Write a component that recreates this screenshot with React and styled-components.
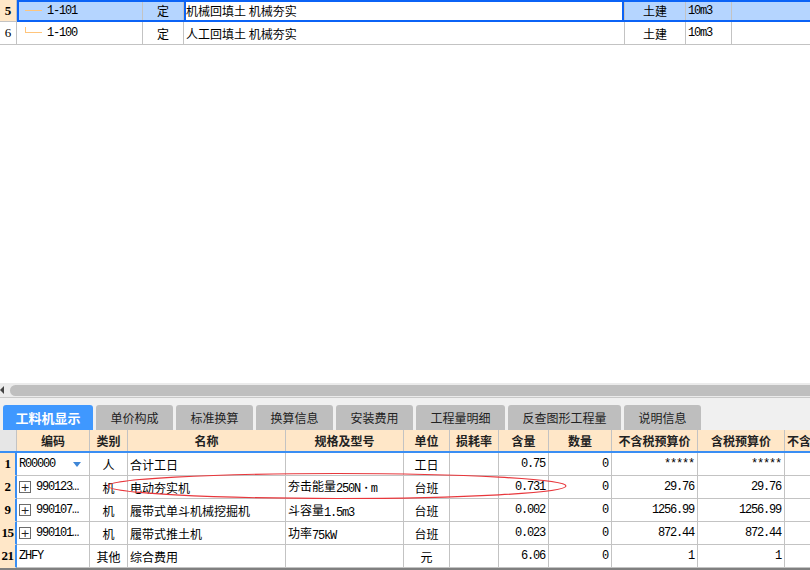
import React from 'react';
import styled, { createGlobalStyle, css } from 'styled-components';

const BLUE = '#0b63f6';
const PEACH = '#ffe7c8';
const LINE = '#c3c3c3';

const Global = createGlobalStyle`
  html, body { margin: 0; padding: 0; background: #fff; }
  body {
    font-family: "Noto Sans CJK SC", "Noto Sans", sans-serif;
    font-size: 12px;
    color: #000;
  }
  * { box-sizing: border-box; }
`;

const Page = styled.div`
  width: 810px;
  height: 570px;
  display: flex;
  flex-direction: column;
  overflow: hidden;
  background: #fff;
`;

/* ---------- top grid ---------- */
const TopArea = styled.div`
  flex: 1;
  background: #fff;
`;

const TopRow = styled.div`
  display: flex;
  height: ${p => p.$h}px;
`;

const RowNum = styled.div`
  width: 17px;
  flex: none;
  display: flex;
  align-items: center;
  justify-content: center;
  border-right: 1px solid ${LINE};
  border-bottom: 1px solid ${LINE};
  font-family: "Liberation Serif", "DejaVu Serif", serif;
  font-size: 13px;
  background: ${p => (p.$hl ? PEACH : '#fff')};
  font-weight: ${p => (p.$hl ? 700 : 400)};
`;

const TopBody = styled.div`
  flex: none;
  width: 798px;
  display: grid;
  grid-template-columns: 126px 41px 441px 61px 46px 1fr;
  ${p =>
    p.$sel &&
    css`
      background: #b5d5ff;
      outline: 2px solid ${BLUE};
      outline-offset: -2px;
    `}
`;

const Cell = styled.div`
  display: flex;
  align-items: center;
  overflow: hidden;
  white-space: nowrap;
  border-right: 1px solid ${LINE};
  border-bottom: 1px solid ${LINE};
  padding: 0 ${p => (p.$pad ?? 2)}px;
  justify-content: ${p =>
    p.$align === 'center' ? 'center' : p.$align === 'right' ? 'flex-end' : 'flex-start'};
  ${p =>
    p.$active &&
    css`
      background: #fff;
      box-shadow: inset 2px 0 ${BLUE}, inset -2px 0 ${BLUE};
    `}
`;

const Tree = styled.span`
  flex: none;
  width: 17px;
  margin-left: 8px;
  margin-right: 5px;
  border-bottom: 1px solid #ffc57c;
  ${p =>
    p.$last
      ? css`
          height: 6px;
          margin-top: -6px;
          border-left: 1px solid #ffc57c;
        `
      : css`
          height: 1px;
          margin-top: -1px;
        `}
`;

const M = styled.span`
  font-family: "Liberation Mono", "DejaVu Sans Mono", monospace;
  font-size: 12px;
  letter-spacing: -1.2px;
  vertical-align: -1px;
`;

/* ---------- scrollbar + tabs ---------- */
const HScroll = styled.div`
  flex: none;
  height: 15px;
  display: flex;
  align-items: center;
  background: #ebebeb;
  border-bottom: 1px solid #c9c9c9;
`;

const ArrowLeft = styled.span`
  width: 0;
  height: 0;
  border-top: 4px solid transparent;
  border-bottom: 4px solid transparent;
  border-right: 4px solid #444;
`;

const Thumb = styled.div`
  flex: 1;
  height: 11px;
  margin-left: 6px;
  margin-right: -10px;
  border-radius: 6px;
  background: #bfbfbf;
`;

const TabBar = styled.div`
  flex: none;
  height: 32px;
  display: flex;
  align-items: flex-end;
  gap: 3px;
  padding-left: 3px;
  background: #f0f0f0;
`;

const Tab = styled.div`
  height: 25px;
  display: flex;
  align-items: center;
  padding: 0 14.5px;
  border-radius: 3px 3px 0 0;
  background: #bebebe;
  color: #222;
  font-size: 12px;
  ${p =>
    p.$active &&
    css`
      background: #3f98ff;
      color: #fff;
      font-weight: 700;
      font-size: 13px;
      padding: 0 12.5px;
    `}
`;

/* ---------- bottom grid ---------- */
const COLS = '17px 73px 38px 158px 118px 46px 49px 50px 63px 86px 87px 60px';

const HeadRow = styled.div`
  flex: none;
  display: grid;
  grid-template-columns: ${COLS};
  height: 21px;
  background: ${PEACH};
`;

const HeadCell = styled.div`
  display: flex;
  align-items: center;
  justify-content: ${p => (p.$left ? 'flex-start' : 'center')};
  padding-left: ${p => (p.$left ? 2 : 0)}px;
  white-space: nowrap;
  overflow: hidden;
  border-right: 1px solid ${LINE};
  font-weight: 700;
  color: #222;
  background: ${p => (p.$corner ? '#e6e6e6' : 'transparent')};
`;

const Body = styled.div`
  position: relative;
  flex: none;
  border-top: 2px solid #3a8ef3;
  border-bottom: 2px solid #808080;
`;

const BodyRow = styled.div`
  display: grid;
  grid-template-columns: ${COLS};
  height: 23px;
`;

const BodyNum = styled.div`
  display: flex;
  align-items: center;
  justify-content: center;
  background: ${PEACH};
  border-right: 2px solid #3a8ef3;
  border-bottom: 1px solid ${PEACH};
  font-family: "Liberation Serif", "DejaVu Serif", serif;
  font-weight: 700;
  font-size: 13px;
  letter-spacing: -0.5px;
`;

const Plus = styled.span`
  flex: none;
  width: 12px;
  height: 12px;
  margin: 0 5px 0 0;
  border: 1px solid #6b6b6b;
  display: flex;
  align-items: center;
  justify-content: center;
  font-family: "DejaVu Sans", sans-serif;
  font-size: 11px;
  line-height: 1;
  color: #222;
`;

const DropTri = styled.span`
  margin-left: auto;
  margin-right: 6px;
  width: 0;
  height: 0;
  border-left: 4px solid transparent;
  border-right: 4px solid transparent;
  border-top: 5px solid #3f86d6;
`;

const Ellipse = styled.svg`
  position: absolute;
  left: 0;
  top: 0;
  width: 810px;
  height: 115px;
  pointer-events: none;
`;

const rows = [
  { n: '1', code: 'R00000', drop: true, type: '人', name: '合计工日', spec: null, unit: '工日', qty: '0.75', amt: '0', p1: '*****', p2: '*****' },
  { n: '2', code: '990123…', plus: true, type: '机', name: '电动夯实机', spec: ['夯击能量', '250N・m'], unit: '台班', qty: '0.731', amt: '0', p1: '29.76', p2: '29.76' },
  { n: '9', code: '990107…', plus: true, type: '机', name: '履带式单斗机械挖掘机', spec: ['斗容量', '1.5m3'], unit: '台班', qty: '0.002', amt: '0', p1: '1256.99', p2: '1256.99' },
  { n: '15', code: '990101…', plus: true, type: '机', name: '履带式推土机', spec: ['功率', '75kW'], unit: '台班', qty: '0.023', amt: '0', p1: '872.44', p2: '872.44' },
  { n: '21', code: 'ZHFY', type: '其他', name: '综合费用', spec: null, unit: '元', qty: '6.06', amt: '0', p1: '1', p2: '1' },
];

const tabs = ['工料机显示', '单价构成', '标准换算', '换算信息', '安装费用', '工程量明细', '反查图形工程量', '说明信息'];
const heads = ['编码', '类别', '名称', '规格及型号', '单位', '损耗率', '含量', '数量', '不含税预算价', '含税预算价'];

export default function App() {
  return (
    <Page>
      <Global />
      <TopArea>
        <TopRow $h={22}>
          <RowNum $hl>5</RowNum>
          <TopBody $sel>
            <Cell $pad={0}>
              <Tree />
              <M>1-101</M>
            </Cell>
            <Cell $align="center">定</Cell>
            <Cell $active>机械回填土 机械夯实</Cell>
            <Cell $align="center">土建</Cell>
            <Cell><M>10m3</M></Cell>
            <Cell />
          </TopBody>
        </TopRow>
        <TopRow $h={23}>
          <RowNum>6</RowNum>
          <TopBody>
            <Cell $pad={0}>
              <Tree $last />
              <M>1-100</M>
            </Cell>
            <Cell $align="center">定</Cell>
            <Cell>人工回填土 机械夯实</Cell>
            <Cell $align="center">土建</Cell>
            <Cell><M>10m3</M></Cell>
            <Cell />
          </TopBody>
        </TopRow>
      </TopArea>

      <HScroll>
        <ArrowLeft />
        <Thumb />
      </HScroll>

      <TabBar>
        {tabs.map((t, i) => (
          <Tab key={t} $active={i === 0}>{t}</Tab>
        ))}
      </TabBar>

      <HeadRow>
        <HeadCell $corner />
        {heads.map(h => (
          <HeadCell key={h}>{h}</HeadCell>
        ))}
        <HeadCell $left>不含税市场价</HeadCell>
      </HeadRow>

      <Body>
        {rows.map(r => (
          <BodyRow key={r.n}>
            <BodyNum>{r.n}</BodyNum>
            <Cell>
              {r.plus && <Plus>+</Plus>}
              <M>{r.code}</M>
              {r.drop && <DropTri />}
            </Cell>
            <Cell $align="center">{r.type}</Cell>
            <Cell>{r.name}</Cell>
            <Cell>
              {r.spec && (
                <span>
                  {r.spec[0]}
                  <M>{r.spec[1]}</M>
                </span>
              )}
            </Cell>
            <Cell $align="center">{r.unit}</Cell>
            <Cell />
            <Cell $align="right" $pad={3}><M>{r.qty}</M></Cell>
            <Cell $align="right" $pad={3}><M>{r.amt}</M></Cell>
            <Cell $align="right" $pad={3}><M>{r.p1}</M></Cell>
            <Cell $align="right" $pad={3}><M>{r.p2}</M></Cell>
            <Cell />
          </BodyRow>
        ))}
        <Ellipse viewBox="0 0 810 115">
          <ellipse cx="337" cy="33" rx="229" ry="12.5" fill="none" stroke="#e8373c" strokeWidth="1.2" />
        </Ellipse>
      </Body>
    </Page>
  );
}
